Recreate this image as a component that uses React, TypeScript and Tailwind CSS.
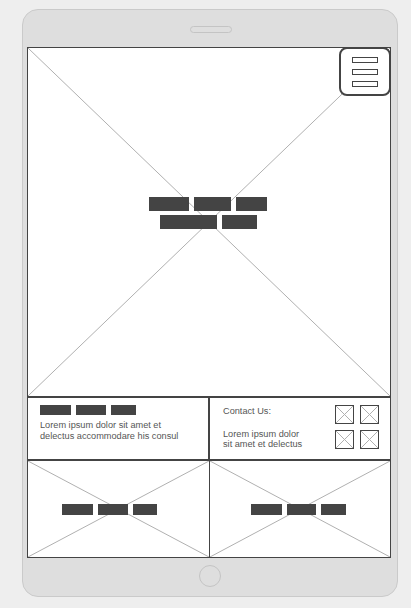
import React from "react";

const XLines = () => (
  <svg className="absolute inset-0 w-full h-full" preserveAspectRatio="none" viewBox="0 0 100 100">
    <line x1="0" y1="0" x2="100" y2="100" stroke="#b0b0b0" strokeWidth="1" vectorEffect="non-scaling-stroke" />
    <line x1="100" y1="0" x2="0" y2="100" stroke="#b0b0b0" strokeWidth="1" vectorEffect="non-scaling-stroke" />
  </svg>
);

const Bar = ({ w, h }: { w: string; h: string }) => <div className={`${w} ${h} bg-[#444444]`} />;

const SmallImg = () => (
  <div className="relative w-[19px] h-[19px] border border-[#444444] bg-white">
    <XLines />
  </div>
);

export default function App() {
  return (
    <div
      className="w-[411px] h-[608px] bg-[#eeeeee] overflow-hidden pt-[9px]"
      style={{ fontFamily: '"Liberation Sans", Arial, sans-serif' }}
    >
      <div className="ml-[22px] w-[376px] h-[588px] bg-[#dedede] border border-[#cacaca] rounded-[16px] flex flex-col">
        <div className="h-[37px] pt-[16px]">
          <div className="ml-[167px] w-[42px] h-[7px] rounded-full border border-[#c4c4c4]" />
        </div>
        <div className="ml-[4px] w-[364px] h-[511px] bg-white border border-[#444444] flex flex-col">
          {/* Hero */}
          <div className="relative h-[348px] flex flex-col items-center justify-center gap-[4px] pb-[18px] pr-[2px]">
            <XLines />
            <div className="relative flex gap-[5px]">
              <Bar w="w-[40px]" h="h-[14px]" />
              <Bar w="w-[37px]" h="h-[14px]" />
              <Bar w="w-[31px]" h="h-[14px]" />
            </div>
            <div className="relative flex gap-[5px]">
              <Bar w="w-[57px]" h="h-[14px]" />
              <Bar w="w-[35px]" h="h-[14px]" />
            </div>
            <div className="absolute right-[-1px] top-[-1px] w-[52px] h-[49px] bg-white border-2 border-[#444444] rounded-[8px] flex flex-col items-center justify-center gap-[6px]">
              <div className="w-[26px] h-[6px] border border-[#444444]" />
              <div className="w-[26px] h-[6px] border border-[#444444]" />
              <div className="w-[26px] h-[6px] border border-[#444444]" />
            </div>
          </div>
          {/* Middle */}
          <div className="h-[65px] border-y-2 border-[#444444] flex">
            <div className="w-[182px] border-r-2 border-[#444444] pl-[12px] pt-[7px]">
              <div className="flex gap-[5px]">
                <Bar w="w-[31px]" h="h-[10px]" />
                <Bar w="w-[30px]" h="h-[10px]" />
                <Bar w="w-[25px]" h="h-[10px]" />
              </div>
              <p className="mt-[5px] text-[9.2px] leading-[10.5px] text-[#555555]">
                Lorem ipsum dolor sit amet et
                <br />
                delectus accommodare his consul
              </p>
            </div>
            <div className="flex-1 flex pl-[13px] pr-[11px] pt-[7px]">
              <div className="flex-1 text-[9.2px] leading-[10px] text-[#555555]">
                <p className="pt-[1px]">Contact Us:</p>
                <p className="mt-[13px]">
                  Lorem ipsum dolor
                  <br />
                  sit amet et delectus
                </p>
              </div>
              <div className="grid grid-cols-2 gap-[6px] h-[44px]">
                <SmallImg />
                <SmallImg />
                <SmallImg />
                <SmallImg />
              </div>
            </div>
          </div>
          {/* Bottom */}
          <div className="flex-1 flex">
            <div className="relative w-[182px] border-r border-[#444444] flex items-center pl-[34px]">
              <XLines />
              <div className="relative flex gap-[5px]">
                <Bar w="w-[31px]" h="h-[11px]" />
                <Bar w="w-[30px]" h="h-[11px]" />
                <Bar w="w-[24px]" h="h-[11px]" />
              </div>
            </div>
            <div className="relative flex-1 flex items-center pl-[41px]">
              <XLines />
              <div className="relative flex gap-[5px]">
                <Bar w="w-[31px]" h="h-[11px]" />
                <Bar w="w-[29px]" h="h-[11px]" />
                <Bar w="w-[25px]" h="h-[11px]" />
              </div>
            </div>
          </div>
        </div>
        <div className="mt-[7px] ml-[176px] w-[22px] h-[22px] rounded-full border border-[#c4c4c4]" />
      </div>
    </div>
  );
}
